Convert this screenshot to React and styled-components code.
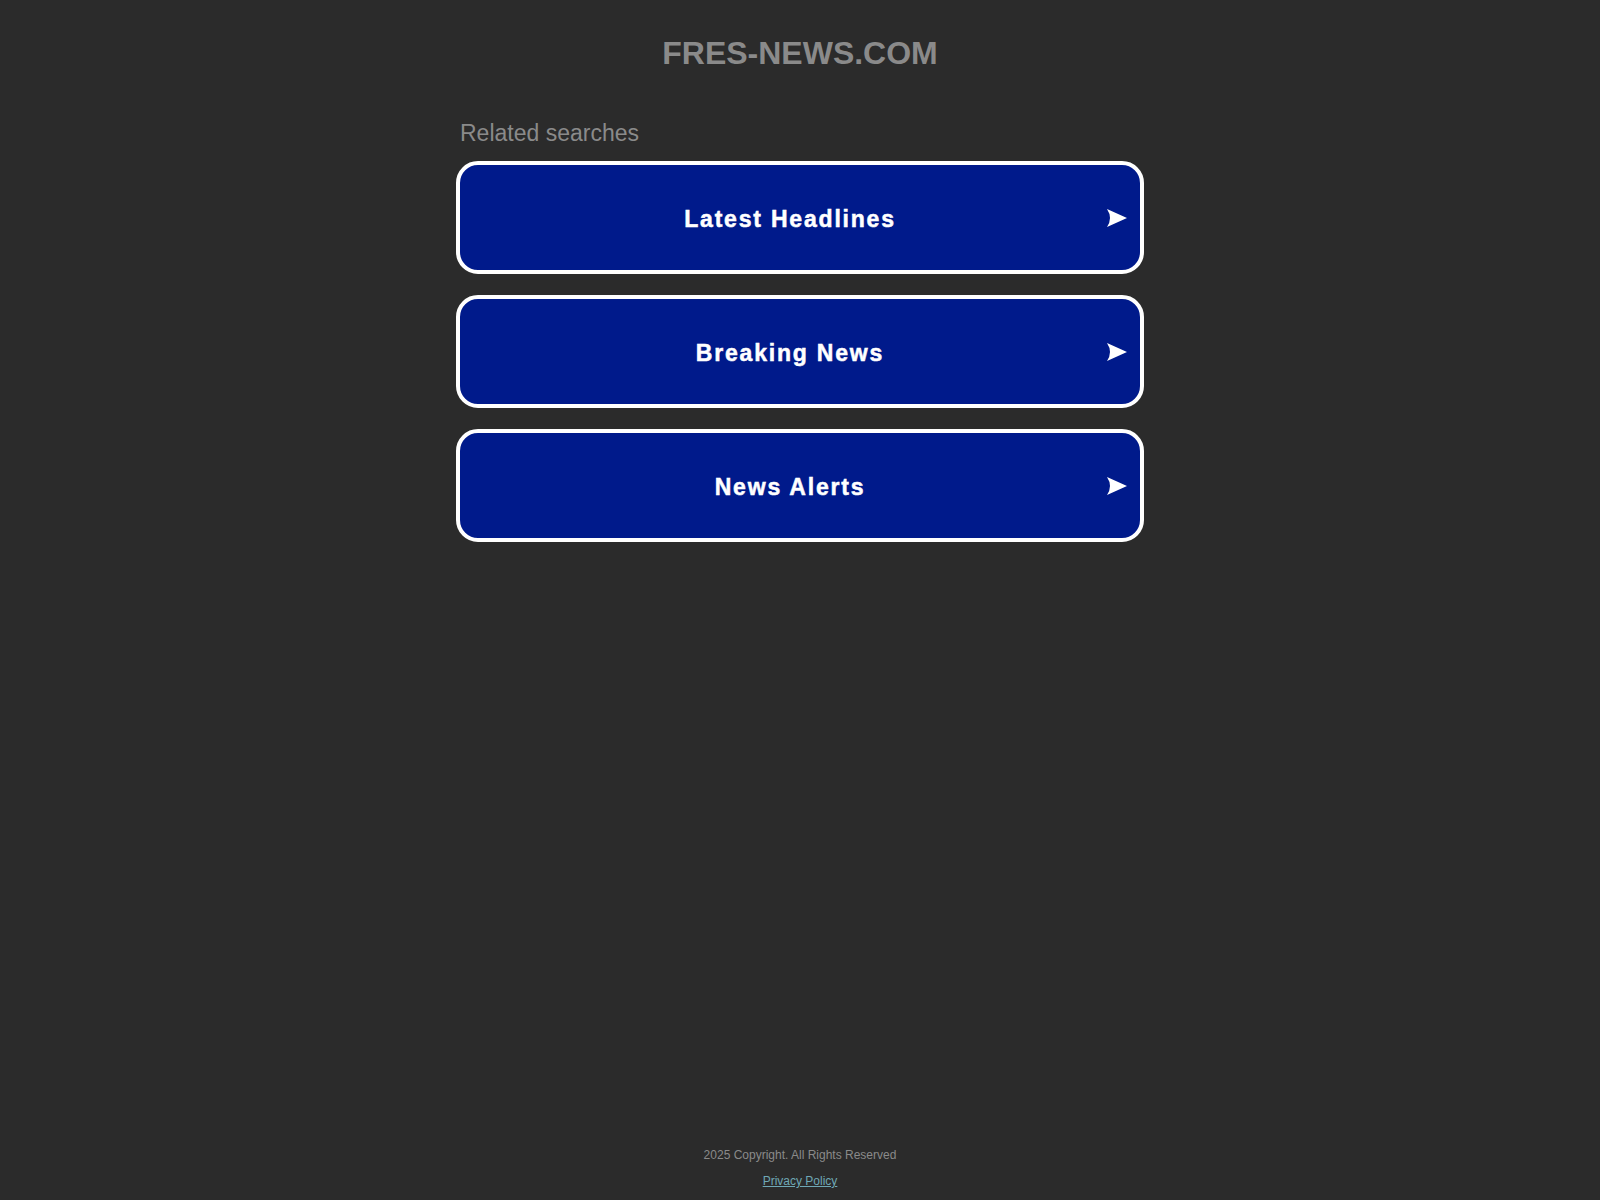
import React from "react";
import styled, { createGlobalStyle } from "styled-components";

const links = ["Latest Headlines", "Breaking News", "News Alerts"];

function Arrow() {
  return (
    <ArrowIcon viewBox="0 0 20 18" aria-hidden="true">
      <path d="M0 0 L20 9 L0 18 Q6 9 0 0 Z" fill="#ffffff" />
    </ArrowIcon>
  );
}

export default function App() {
  return (
    <>
      <GlobalStyle />
      <Page>
        <Main>
          <Title>FRES-NEWS.COM</Title>
          <Related>
            <Heading>Related searches</Heading>
            <List>
              {links.map((label) => (
                <SearchLink key={label} href="#">
                  <Label>{label}</Label>
                  <Arrow />
                </SearchLink>
              ))}
            </List>
          </Related>
        </Main>
        <Footer>
          <Copy>2025 Copyright. All Rights Reserved</Copy>
          <Privacy href="#">Privacy Policy</Privacy>
        </Footer>
      </Page>
    </>
  );
}

const GlobalStyle = createGlobalStyle`
  html, body {
    margin: 0;
    padding: 0;
    background: #2b2b2b;
    font-family: "Liberation Sans", Arial, sans-serif;
  }
  * {
    box-sizing: border-box;
  }
`;

const Page = styled.div`
  min-height: 100vh;
  display: flex;
  flex-direction: column;
  align-items: center;
`;

const Main = styled.div`
  display: flex;
  flex-direction: column;
  align-items: center;
  padding-top: 35px;
`;

const Title = styled.h1`
  margin: 0;
  font-size: 32px;
  line-height: 37px;
  font-weight: 700;
  color: #8a8a8a;
`;

const Related = styled.div`
  width: 688px;
  margin-top: 49px;
`;

const Heading = styled.div`
  font-size: 23px;
  line-height: 25px;
  color: #8a8a8a;
  padding-left: 4px;
  margin-bottom: 15px;
`;

const List = styled.div`
  display: flex;
  flex-direction: column;
  gap: 21px;
`;

const SearchLink = styled.a`
  display: flex;
  align-items: center;
  height: 113px;
  padding: 0 13px;
  background: #001a8b;
  border: 4px solid #ffffff;
  border-radius: 22px;
  text-decoration: none;
  color: #ffffff;
`;

const Label = styled.span`
  flex: 1;
  padding-top: 4px;
  text-align: center;
  font-size: 23px;
  font-weight: 700;
  letter-spacing: 1.8px;
  -webkit-text-stroke: 0.5px #ffffff;
  color: #ffffff;
`;

const ArrowIcon = styled.svg`
  width: 20px;
  height: 18px;
  flex-shrink: 0;
`;

const Footer = styled.footer`
  margin-top: auto;
  display: flex;
  flex-direction: column;
  align-items: center;
  gap: 12px;
  padding-bottom: 12px;
`;

const Copy = styled.div`
  font-size: 12px;
  line-height: 14px;
  color: #8a8a8a;
`;

const Privacy = styled.a`
  font-size: 12px;
  line-height: 14px;
  color: #6fa8b6;
  text-decoration: underline;
`;
